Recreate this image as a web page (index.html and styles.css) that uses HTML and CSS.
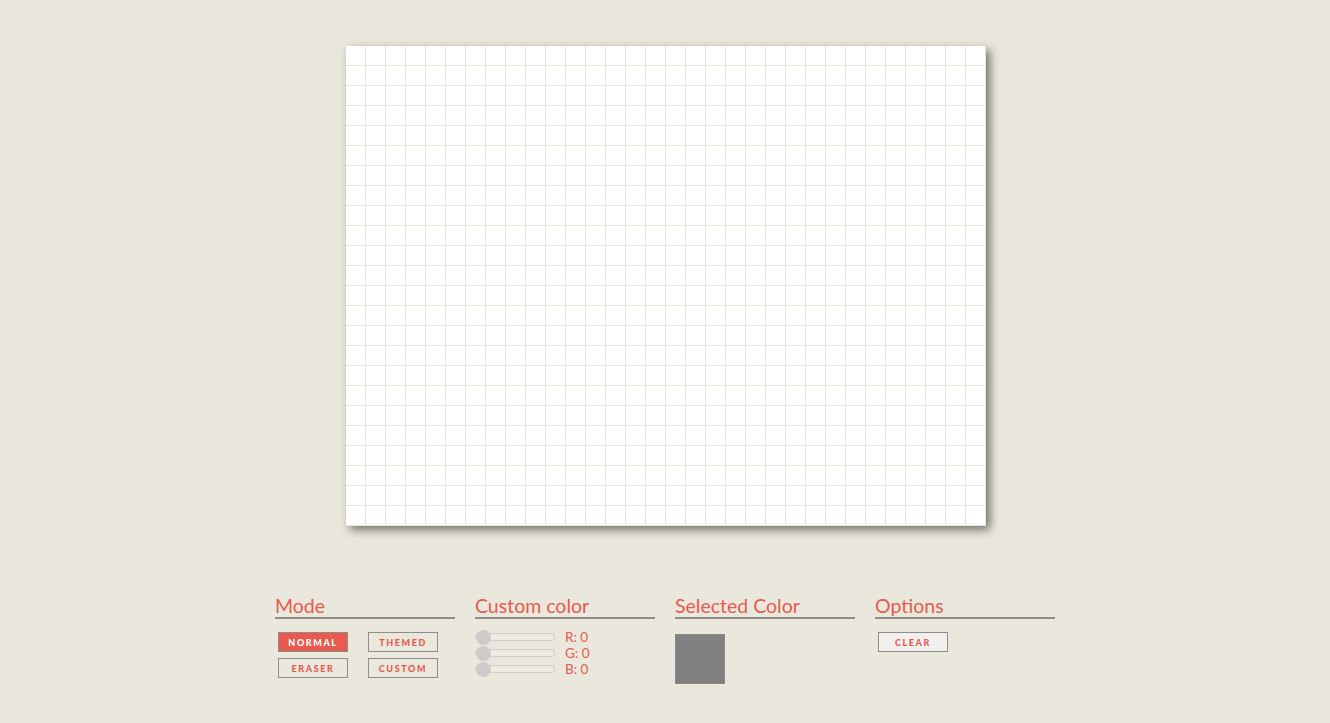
FILE: index.html
```html
<!DOCTYPE html>
<html>
<head>
<meta charset="utf-8">
<link rel="stylesheet" href="styles.css">
</head>
<body>
<main class="page">
  <div class="canvas"></div>
  <section class="controls">
    <div class="group">
      <h2 class="title">Mode</h2>
      <div class="modes">
        <button class="btn active">NORMAL</button>
        <button class="btn">THEMED</button>
        <button class="btn">ERASER</button>
        <button class="btn">CUSTOM</button>
      </div>
    </div>
    <div class="group">
      <h2 class="title">Custom color</h2>
      <div class="sliders">
        <div class="slider-row"><input class="range" type="range" min="0" max="255" value="0"><span class="lbl">R: 0</span></div>
        <div class="slider-row"><input class="range" type="range" min="0" max="255" value="0"><span class="lbl">G: 0</span></div>
        <div class="slider-row"><input class="range" type="range" min="0" max="255" value="0"><span class="lbl">B: 0</span></div>
      </div>
    </div>
    <div class="group">
      <h2 class="title">Selected Color</h2>
      <div class="swatch"></div>
    </div>
    <div class="group">
      <h2 class="title">Options</h2>
      <div class="options">
        <button class="btn light">CLEAR</button>
      </div>
    </div>
  </section>
</main>
</body>
</html>
```
FILE: styles.css
```css
html, body {
  margin: 0;
  padding: 0;
  background: #eae7dc;
}
body {
  font-family: "Lato", "Noto Sans", sans-serif;
}
.page {
  display: flex;
  flex-direction: column;
  align-items: center;
  padding-top: 46px;
}
.canvas {
  width: 640px;
  height: 480px;
  margin-left: 2px;
  background-color: #ffffff;
  background-image:
    linear-gradient(to right, transparent 19px, #e8e5da 19px),
    linear-gradient(to bottom, transparent 19px, #e8e5da 19px);
  background-size: 20px 20px;
  box-shadow: 4px 4px 9px rgba(0, 0, 0, 0.5);
}
.controls {
  display: flex;
  gap: 20px;
  margin-top: 69px;
}
.group {
  width: 180px;
}
.title {
  margin: 0;
  font-weight: 400;
  font-size: 19.5px;
  line-height: 22px;
  color: #e85a4f;
  border-bottom: 2px solid #8e8d8a;
  padding-bottom: 0;
}
.modes {
  display: grid;
  grid-template-columns: 70px 70px;
  column-gap: 20px;
  row-gap: 6px;
  padding: 13px 0 0 3px;
}
.btn {
  display: block;
  width: 70px;
  height: 20px;
  padding: 0;
  border: 1px solid #8e8d8a;
  background: #eae7dc;
  color: #e85a4f;
  font-family: "Lato", "Noto Sans", sans-serif;
  font-weight: 900;
  font-size: 9px;
  letter-spacing: 1.6px;
  cursor: pointer;
}
.btn.active {
  background: #e85a4f;
  color: #ffffff;
}
.btn.light {
  background: #f1f0ef;
}
.sliders {
  display: flex;
  flex-direction: column;
  padding-top: 10px;
}
.slider-row {
  display: flex;
  align-items: center;
  height: 16px;
}
.range {
  -webkit-appearance: none;
  appearance: none;
  width: 80px;
  height: 8px;
  margin: 0 10px 0 0;
  background: #efebe4;
  border: 1px solid #cfcbc6;
  border-radius: 5px;
  box-sizing: border-box;
  outline: none;
}
.range::-webkit-slider-thumb {
  -webkit-appearance: none;
  appearance: none;
  width: 15px;
  height: 15px;
  border-radius: 50%;
  background: #cccbca;
  border: none;
}
.lbl {
  font-size: 13.5px;
  color: #e85a4f;
  line-height: 16px;
}
.swatch {
  width: 50px;
  height: 50px;
  margin-top: 15px;
  box-sizing: border-box;
  background: #808080;
  border: 1px solid #8a8987;
}
.options {
  display: flex;
  padding: 13px 0 0 3px;
}
```
